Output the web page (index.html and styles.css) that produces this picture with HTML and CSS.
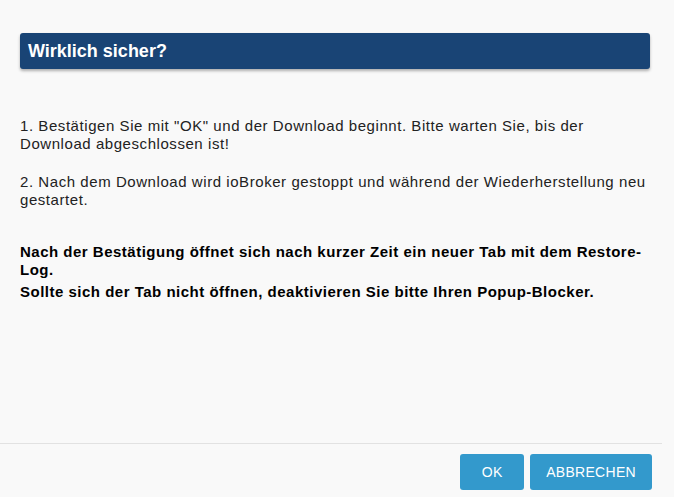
FILE: index.html
```html
<!DOCTYPE html>
<html lang="de">
<head>
<meta charset="utf-8">
<link rel="stylesheet" href="styles.css">
</head>
<body>
<div class="dialog">
  <div class="content">
    <div class="title-bar">Wirklich sicher?</div>
    <div class="text">
      <p class="msg">1. Bestätigen Sie mit "OK" und der Download beginnt. Bitte warten Sie, bis der Download abgeschlossen ist!</p>
      <p class="msg next">2. Nach dem Download wird ioBroker gestoppt und während der Wiederherstellung neu gestartet.</p>
      <p class="note">Nach der Bestätigung öffnet sich nach kurzer Zeit ein neuer Tab mit dem Restore-Log.</p>
      <p class="note second">Sollte sich der Tab nicht öffnen, deaktivieren Sie bitte Ihren Popup-Blocker.</p>
    </div>
  </div>
  <div class="actions">
    <button class="btn">OK</button>
    <button class="btn">ABBRECHEN</button>
  </div>
</div>
</body>
</html>
```
FILE: styles.css
```css
html, body {
  margin: 0;
  padding: 0;
  height: 100%;
  background: #f9f9f9;
  font-family: "Liberation Sans", Arial, sans-serif;
}
.dialog {
  height: 497px;
  display: flex;
  flex-direction: column;
  width: 662px;
}
.content {
  flex: 1;
  padding: 33px 12px 0 20px;
}
.title-bar {
  height: 36px;
  background: #194475;
  color: #fff;
  font-size: 18px;
  font-weight: bold;
  display: flex;
  align-items: center;
  padding-left: 8px;
  border-radius: 3px;
  box-shadow: 0 2px 3px rgba(0,0,0,0.3);
}
.text {
  padding-top: 48px;
  font-size: 15px;
  letter-spacing: 0.56px;
  line-height: 18px;
  color: #222;
  width: 630px;
}
.msg {
  margin: 0;
}
.msg.next {
  margin-top: 20px;
}
.note {
  margin: 0;
  font-weight: bold;
  color: #000;
  letter-spacing: 0.5px;
}
.msg + .note {
  margin-top: 34px;
}
.note.second {
  margin-top: 4px;
}
.actions {
  border-top: 1px solid #e2e2e2;
  display: flex;
  justify-content: flex-end;
  gap: 6px;
  padding: 10px 10px 7px 0;
}
.btn {
  height: 36px;
  min-width: 64px;
  padding: 0 16px;
  background: #3399cc;
  color: #fff;
  border: none;
  border-radius: 3px;
  font-family: "Liberation Sans", Arial, sans-serif;
  font-size: 14px;
  letter-spacing: 0.3px;
}
```
